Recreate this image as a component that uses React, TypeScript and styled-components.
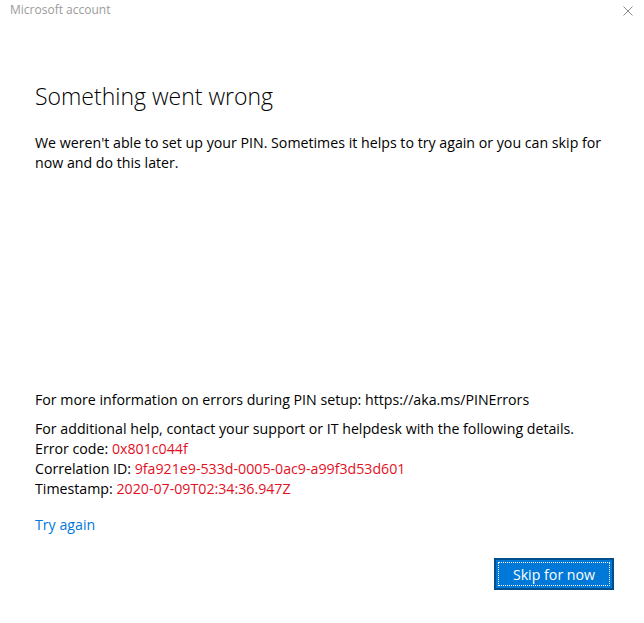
import React from 'react'
import styled, { createGlobalStyle } from 'styled-components'

const GlobalStyle = createGlobalStyle`
  html, body {
    margin: 0;
    padding: 0;
    background: #fff;
  }
  body {
    font-family: 'Open Sans', 'Noto Sans', 'Liberation Sans', sans-serif;
    color: #000;
  }
`

const Window = styled.div`
  width: 644px;
  height: 623px;
  display: flex;
  flex-direction: column;
  box-sizing: border-box;
  background: #fff;
`

const TitleBar = styled.div`
  height: 30px;
  display: flex;
  align-items: flex-start;
  justify-content: space-between;
  padding: 2px 10px 0 10px;
  box-sizing: border-box;
`

const TitleText = styled.span`
  font-size: 12px;
  color: #9b9b9b;
  line-height: 16px;
`

const CloseButton = styled.button`
  border: none;
  background: none;
  padding: 0;
  margin-top: 3px;
  width: 12px;
  height: 12px;
  display: flex;
  align-items: center;
  justify-content: center;
  cursor: pointer;
`

const Content = styled.div`
  flex: 1;
  display: flex;
  flex-direction: column;
  padding: 50px 30px 33px 35px;
`

const Heading = styled.h1`
  margin: 0;
  font-size: 23px;
  font-weight: 300;
  line-height: 32px;
`

const Paragraph = styled.p<{ $gap?: number }>`
  margin: ${p => p.$gap ?? 0}px 0 0 0;
  font-size: 14.2px;
  line-height: 20px;
`

const Spacer = styled.div`
  flex: 1;
`

const Red = styled.span`
  color: #e3101f;
`

const Link = styled.a`
  display: block;
  margin-top: 16px;
  font-size: 14.2px;
  line-height: 20px;
  color: #0078d7;
  text-decoration: none;
  cursor: pointer;
`

const Footer = styled.div`
  display: flex;
  justify-content: flex-end;
  margin-top: 23px;
`

const PrimaryButton = styled.button`
  width: 120px;
  height: 32px;
  background: #0078d7;
  border: 2px solid #004e8c;
  color: #fff;
  font-family: inherit;
  font-size: 14.2px;
  outline: 1px dotted #fff;
  outline-offset: -5px;
  padding: 0;
  cursor: pointer;
`

const CloseIcon = () => (
  <svg width="10" height="10" viewBox="0 0 10 10">
    <path d="M0.5 0.5 L9.5 9.5 M9.5 0.5 L0.5 9.5" stroke="#8a8a8a" strokeWidth="1" fill="none" />
  </svg>
)

const App = () => {
  return (
    <>
      <GlobalStyle />
      <Window>
        <TitleBar>
          <TitleText>Microsoft account</TitleText>
          <CloseButton aria-label="Close">
            <CloseIcon />
          </CloseButton>
        </TitleBar>
        <Content>
          <Heading>Something went wrong</Heading>
          <Paragraph $gap={21}>
            We weren't able to set up your PIN. Sometimes it helps to try again or you can skip for now and do this later.
          </Paragraph>
          <Spacer />
          <Paragraph>
            For more information on errors during PIN setup: https://aka.ms/PINErrors
          </Paragraph>
          <Paragraph $gap={9}>
            For additional help, contact your support or IT helpdesk with the following details.
            <br />
            Error code: <Red>0x801c044f</Red>
            <br />
            Correlation ID: <Red>9fa921e9-533d-0005-0ac9-a99f3d53d601</Red>
            <br />
            Timestamp: <Red>2020-07-09T02:34:36.947Z</Red>
          </Paragraph>
          <Link>Try again</Link>
          <Footer>
            <PrimaryButton>Skip for now</PrimaryButton>
          </Footer>
        </Content>
      </Window>
    </>
  )
}

export default App
